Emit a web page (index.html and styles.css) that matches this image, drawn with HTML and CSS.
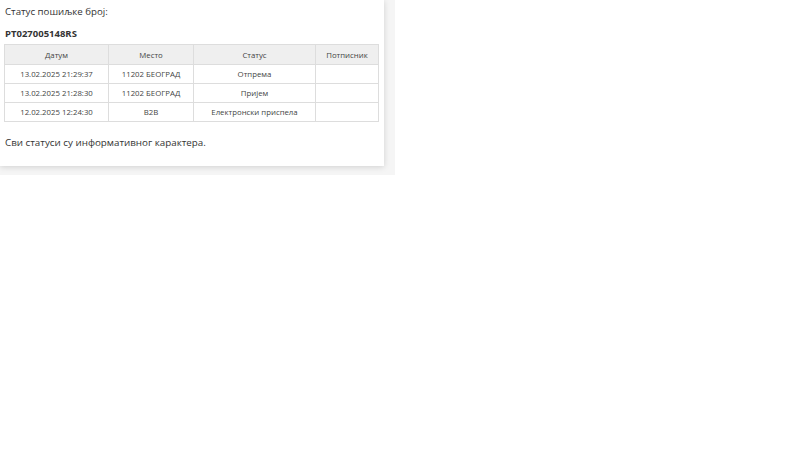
FILE: index.html
```html
<!DOCTYPE html>
<html>
<head>
<meta charset="utf-8">
<link rel="stylesheet" href="styles.css">
</head>
<body>
<div class="wrap">
  <div class="card">
    <div class="title">Статус пошиљке број:</div>
    <div class="number">PT027005148RS</div>
    <table class="tbl">
      <thead>
        <tr><th class="c1">Датум</th><th class="c2">Место</th><th class="c3">Статус</th><th class="c4">Потписник</th></tr>
      </thead>
      <tbody>
        <tr><td>13.02.2025 21:29:37</td><td>11202 БЕОГРАД</td><td>Отпрема</td><td></td></tr>
        <tr><td>13.02.2025 21:28:30</td><td>11202 БЕОГРАД</td><td>Пријем</td><td></td></tr>
        <tr><td>12.02.2025 12:24:30</td><td>B2B</td><td>Електронски приспела</td><td></td></tr>
      </tbody>
    </table>
    <div class="note">Сви статуси су информативног карактера.</div>
  </div>
</div>
</body>
</html>
```
FILE: styles.css
```css
html, body { margin: 0; padding: 0; background: #fff; }
body { font-family: "Open Sans", "Liberation Sans", sans-serif; color: #333; }
.wrap { width: 395px; height: 175px; background: #f5f5f5; }
.card { width: 384px; height: 166px; background: #fff; box-shadow: 0 1px 6px rgba(0,0,0,0.15); box-sizing: border-box; padding: 4px 5px 0 5px; }
.title { font-size: 9.7px; line-height: 16px; }
.number { font-size: 9.5px; font-weight: bold; line-height: 14px; margin-top: 7px; }
.tbl { border-collapse: collapse; margin-top: 3px; margin-left: -1px; width: 375px; font-size: 7.8px; }
.tbl th, .tbl td { border: 1px solid #ddd; text-align: center; padding: 0; height: 18px; font-weight: normal; color: #444; }
.tbl th { background: #efefef; height: 19px; }
.c1 { width: 103px; } .c2 { width: 84px; } .c3 { width: 121px; } .c4 { width: 62px; }
.note { font-size: 9.8px; line-height: 15px; margin-top: 13px; }
```
